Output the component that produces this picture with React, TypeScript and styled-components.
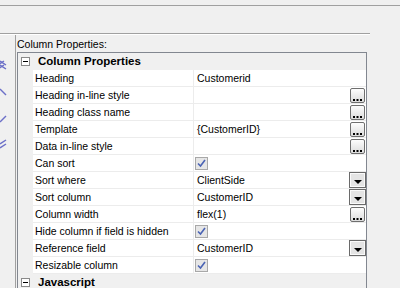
import React from 'react'
import styled, { createGlobalStyle } from 'styled-components'

const Global = createGlobalStyle`
  html, body {
    margin: 0;
    padding: 0;
    background: #f0f0f0;
  }
  body {
    font-family: "Liberation Sans", Arial, sans-serif;
    font-size: 10.5px;
    color: #000;
  }
`

const Page = styled.div`
  width: 400px;
  height: 288px;
  overflow: hidden;
  background: #f0f0f0;
  display: flex;
  flex-direction: column;
`
const TopEdge = styled.div`
  height: 5px;
  border-bottom: 1px solid #a0a0a0;
  flex: none;
`
const Toolbar = styled.div`
  height: 27px;
  flex: none;
`
const Divider = styled.div`
  width: 370px;
  height: 1px;
  background: #a0a0a0;
  border-bottom: 1px solid #fff;
  flex: none;
`
const Body = styled.div`
  display: flex;
  flex: 1;
  min-height: 0;
`
const SideStrip = styled.div`
  width: 15px;
  border-right: 1px solid #a0a0a0;
  overflow: hidden;
  display: flex;
  flex-direction: column;
  flex: none;
`
const SideIcon = styled.svg<{ $top: number }>`
  display: block;
  margin-top: ${(p) => p.$top}px;
  flex: none;
`
const Main = styled.div`
  padding-left: 1px;
  display: flex;
  flex-direction: column;
`
const Caption = styled.div`
  height: 17px;
  line-height: 16px;
  padding-top: 1px;
`
const Grid = styled.div`
  width: 348px;
  border: 1px solid #828790;
  border-bottom: none;
  background: #f0f0f0;
`
const Category = styled.div`
  height: 16px;
  border-bottom: 1px solid #f0f0f0;
  display: flex;
  align-items: center;
  font-weight: bold;
  font-size: 11.5px;
`
const Toggle = styled.span`
  width: 7px;
  height: 7px;
  border: 1px solid #8a8a8a;
  background: #fff;
  margin: 0 8px 0 3px;
  position: relative;
  flex: none;
  &::after {
    content: '';
    position: absolute;
    left: 1px;
    top: 3px;
    width: 5px;
    height: 1px;
    background: #000;
  }
`
const Row = styled.div`
  display: flex;
  height: 16px;
  border-bottom: 1px solid #ececec;
  margin-left: 15px;
  background: #fff;
`
const Label = styled.div`
  width: 158px;
  padding-left: 2px;
  border-right: 1px solid #ececec;
  line-height: 16px;
  white-space: nowrap;
  overflow: hidden;
`
const Value = styled.div`
  flex: 1;
  display: flex;
  align-items: center;
  padding-left: 3px;
  line-height: 16px;
  white-space: nowrap;
`
const ValueText = styled.span`
  flex: 1;
`
const EllipsisButton = styled.span`
  width: 13px;
  height: 13px;
  border: 1px solid #6f6f6f;
  border-radius: 2px;
  background: linear-gradient(#fdfdfd, #dcdcdc);
  display: flex;
  align-items: flex-end;
  justify-content: center;
  flex: none;
  margin-right: 1px;
`
const DropButton = styled.span`
  width: 15px;
  height: 14px;
  border: 1px solid #6a6a6a;
  box-shadow: inset 0 0 0 1px #fafafa;
  background: #e4e4e4;
  display: flex;
  align-items: center;
  justify-content: center;
  flex: none;
`
const Check = styled.span`
  width: 11px;
  height: 11px;
  border: 1px solid #a8a8a8;
  background: #e6e6e6;
  display: flex;
  align-items: center;
  justify-content: center;
  margin-left: -2px;
`

type Kind = 'text' | 'dots' | 'drop' | 'check'

const rows: { label: string; value?: string; kind: Kind }[] = [
  { label: 'Heading', value: 'Customerid', kind: 'text' },
  { label: 'Heading in-line style', kind: 'dots' },
  { label: 'Heading class name', kind: 'dots' },
  { label: 'Template', value: '{CustomerID}', kind: 'dots' },
  { label: 'Data in-line style', kind: 'dots' },
  { label: 'Can sort', kind: 'check' },
  { label: 'Sort where', value: 'ClientSide', kind: 'drop' },
  { label: 'Sort column', value: 'CustomerID', kind: 'drop' },
  { label: 'Column width', value: 'flex(1)', kind: 'dots' },
  { label: 'Hide column if field is hidden', kind: 'check' },
  { label: 'Reference field', value: 'CustomerID', kind: 'drop' },
  { label: 'Resizable column', kind: 'check' },
]

const Dots = () => (
  <svg width="9" height="4" viewBox="0 0 9 4">
    <rect x="0" y="1" width="2" height="2" fill="#000" />
    <rect x="3.5" y="1" width="2" height="2" fill="#000" />
    <rect x="7" y="1" width="2" height="2" fill="#000" />
  </svg>
)

const Arrow = () => (
  <svg width="8" height="4" viewBox="0 0 8 4" style={{ marginTop: 3 }}>
    <path d="M0 0h8L4 4z" fill="#000" />
  </svg>
)

const Tick = () => (
  <svg width="9" height="9" viewBox="0 0 9 9">
    <path d="M1 4.5L3.5 7L8 1" stroke="#4a63b4" strokeWidth="1.6" fill="none" />
  </svg>
)

const chevron = '#6c70c8'

export default function App() {
  return (
    <Page>
      <Global />
      <TopEdge />
      <Toolbar />
      <Divider />
      <Body>
        <SideStrip>
          <SideIcon $top={25} width="15" height="10" viewBox="0 0 15 10">
            <path d="M-2 5L4 1M-2 9L4 5" stroke={chevron} strokeWidth="1.5" fill="none" />
            <path d="M0 1L6 5M0 5L6 9" stroke={chevron} strokeWidth="1.5" fill="none" />
          </SideIcon>
          <SideIcon $top={18} width="15" height="8" viewBox="0 0 15 8">
            <path d="M0 1L6 7" stroke={chevron} strokeWidth="1.5" fill="none" />
          </SideIcon>
          <SideIcon $top={19} width="15" height="8" viewBox="0 0 15 8">
            <path d="M0 7L6 1" stroke={chevron} strokeWidth="1.5" fill="none" />
          </SideIcon>
          <SideIcon $top={16} width="15" height="10" viewBox="0 0 15 10">
            <path d="M0 5L6 1M0 9L6 5" stroke={chevron} strokeWidth="1.5" fill="none" />
          </SideIcon>
        </SideStrip>
        <Main>
          <Caption>Column Properties:</Caption>
          <Grid>
            <Category>
              <Toggle />
              Column Properties
            </Category>
            {rows.map((r) => (
              <Row key={r.label}>
                <Label>{r.label}</Label>
                <Value>
                  {r.kind === 'check' ? (
                    <Check>
                      <Tick />
                    </Check>
                  ) : (
                    <ValueText>{r.value}</ValueText>
                  )}
                  {r.kind === 'dots' && (
                    <EllipsisButton>
                      <Dots />
                    </EllipsisButton>
                  )}
                  {r.kind === 'drop' && (
                    <DropButton>
                      <Arrow />
                    </DropButton>
                  )}
                </Value>
              </Row>
            ))}
            <Category>
              <Toggle />
              Javascript
            </Category>
          </Grid>
        </Main>
      </Body>
    </Page>
  )
}
